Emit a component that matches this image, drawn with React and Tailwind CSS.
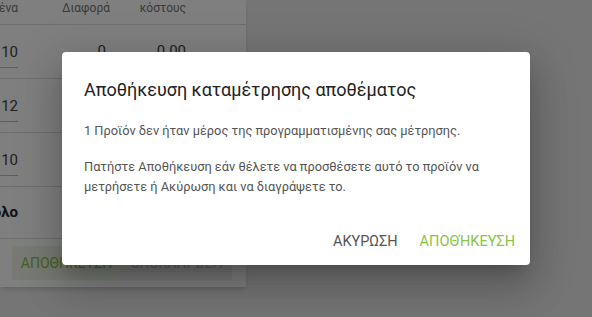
import { useState } from "react";

const rows = [
  { counted: "10", diff: "0", cost: "0.00" },
  { counted: "12", diff: "2", cost: "1.20" },
  { counted: "10", diff: "0", cost: "0.00" },
];

function StockTable() {
  return (
    <div className="w-[246px] h-[287px] overflow-hidden bg-white shadow-md">
      <div className="-ml-[62px] -mt-[16px] w-[308px]">
        {/* header */}
        <div className="flex h-[41px] items-end pb-[8px] border-b border-[#dddddd] text-[12px] leading-[15px] text-[#757575]">
          <div className="w-[80px] text-right">Μετρημένα</div>
          <div className="w-[92px] text-right">Διαφορά</div>
          <div className="w-[76px] text-right">
            Εκτίμηση
            <br />
            κόστους
          </div>
        </div>
        {rows.map((r, i) => (
          <div
            key={i}
            className="flex h-[54px] items-center border-b border-[#dddddd] text-[15px] text-[#444444]"
          >
            <div className="w-[80px] flex justify-end">
              <div className="w-[34px] pt-[6px] pb-[4px] border-b border-[#bbbbbb] text-right">
                {r.counted}
              </div>
            </div>
            <div className="w-[88px] text-right">{r.diff}</div>
            <div className="w-[80px] text-right">{r.cost}</div>
          </div>
        ))}
        <div className="flex h-[52px] items-center border-b border-[#dddddd] text-[15px] font-bold text-[#222222]">
          <div className="w-[80px] text-right">Σύνολο</div>
        </div>
        <div className="flex pt-[7px] pl-[74px] text-[14px] leading-[34px]">
          <div className="w-[109px] bg-[#eef6e6] text-center text-[#8bc34a]">
            ΑΠΟΘΗΚΕΥΣΗ
          </div>
          <div className="w-[111px] bg-[#eeeeee] text-center text-[#bdbdbd]">
            ΟΛΟΚΛΗΡΩΣΗ
          </div>
        </div>
      </div>
    </div>
  );
}

function SaveDialog({ onClose }) {
  return (
    <div className="w-[468px] h-[213px] rounded-[4px] bg-white shadow-[0_11px_15px_-7px_rgba(0,0,0,0.2),0_24px_38px_3px_rgba(0,0,0,0.14),0_9px_46px_8px_rgba(0,0,0,0.12)] flex flex-col">
      <h2 className="px-[22px] pt-[25px] text-[18px] leading-[26px] text-[#222222]">
        Αποθήκευση καταμέτρησης αποθέματος
      </h2>
      <div className="px-[22px] pt-[18px] text-[12.8px] leading-[20px] text-[#555555]">
        <p>1 Προϊόν δεν ήταν μέρος της προγραμματισμένης σας μέτρησης.</p>
        <p className="mt-[16px]">
          Πατήστε Αποθήκευση εάν θέλετε να προσθέσετε αυτό το προϊόν να
          μετρήσετε ή Ακύρωση και να διαγράψετε το.
        </p>
      </div>
      <div className="mt-auto flex justify-end gap-[6px] px-[7px] pb-[5px] text-[14.5px]">
        <button
          className="h-[36px] px-[8px] text-[#555555]"
          onClick={onClose}
        >
          ΑΚΥΡΩΣΗ
        </button>
        <button
          className="h-[36px] px-[8px] text-[#8bc34a]"
          onClick={onClose}
        >
          ΑΠΟΘΉΚΕΥΣΗ
        </button>
      </div>
    </div>
  );
}

export default function App() {
  const [open, setOpen] = useState(true);

  return (
    <div
      className="relative w-[592px] h-[317px] overflow-hidden bg-[#ebebeb]"
      style={{ fontFamily: "Roboto, 'Liberation Sans', sans-serif" }}
    >
      <StockTable />
      {open && (
        <div className="absolute inset-0 flex items-center justify-center bg-black/50">
          <SaveDialog onClose={() => setOpen(false)} />
        </div>
      )}
    </div>
  );
}
